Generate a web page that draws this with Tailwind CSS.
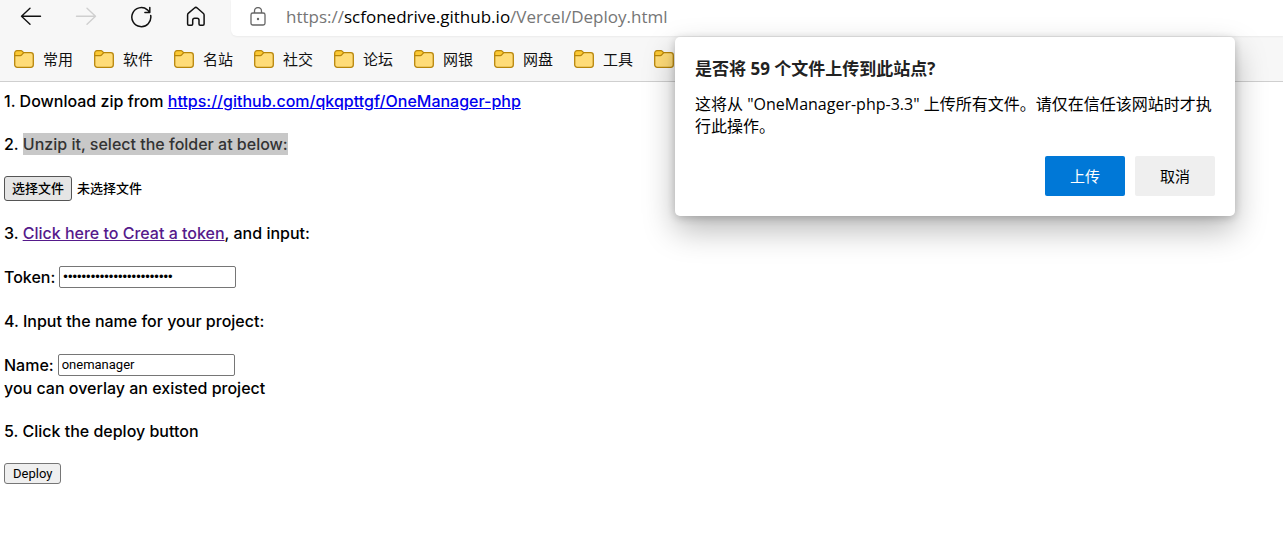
<!DOCTYPE html>
<html lang="zh-CN">
<head>
<meta charset="utf-8">
<title>Deploy</title>
<script src="https://cdn.jsdelivr.net/npm/@tailwindcss/browser@4"></script>
</head>
<body class="relative min-h-screen overflow-x-hidden bg-white text-black">
<svg class="absolute size-0" aria-hidden="true">
  <symbol id="folder" viewBox="0 0 20 18">
    <rect x="0.700" y="2.700" width="18.600" height="14.600" rx="2.500" fill="#ffdc78" stroke="#b8860b" stroke-width="1.300"/>
    <path d="M.7 5.600V3A2.300 2.300 0 0 1 3 .7h4c.6 0 1 .2 1.400.6l1.300 1.400-2 2.200c-.4.500-.8.700-1.400.7z" fill="#fcc934" stroke="#b8860b" stroke-width="1.200" stroke-linejoin="round"/>
  </symbol>
</svg>
<header class="flex flex-col border-b border-[#cfcfcf] bg-[#f7f7f7] font-['Open_Sans','Noto_Sans_CJK_SC',sans-serif]">
  <div class="flex h-9">
    <nav class="flex w-[231px] shrink-0 items-start gap-[31px] pt-1 pl-5">
      <button type="button" aria-label="Back" class="size-6"><svg class="size-6" viewBox="0 0 24 24" fill="none" stroke="#111" stroke-width="1.4" stroke-linecap="round" stroke-linejoin="round"><path d="M20.500 12.300H1.500M10 4.300l-8.500 8 8.500 8"/></svg></button>
      <button type="button" aria-label="Forward" disabled class="size-6"><svg class="size-6" viewBox="0 0 24 24" fill="none" stroke="#cfcfcf" stroke-width="1.400" stroke-linecap="round" stroke-linejoin="round"><path d="M1.500 12.300h19M12 4.300l8.500 8-8.500 8"/></svg></button>
      <button type="button" aria-label="Refresh" class="size-6"><svg class="size-6" viewBox="0 0 24 24" fill="none" stroke="#111" stroke-width="1.500" stroke-linecap="round" stroke-linejoin="round"><path d="M20.700 11.500a9.500 9.500 0 1 1-3.300-5.700l2.300 2.400M19.800 3.600v4.900h-4.900"/></svg></button>
      <button type="button" aria-label="Home" class="size-6"><svg class="size-6" viewBox="0 0 24 24" fill="none" stroke="#111" stroke-width="1.500" stroke-linejoin="round"><path d="M2.600 11c0-.8.300-1.300.9-1.800l6-5.200c.900-.8 1.800-.8 2.700 0l6 5.200c.600.500.9 1 .9 1.800v9c0 .8-.4 1.200-1.200 1.200h-2.700c-.8 0-1.200-.4-1.200-1.200v-3.800c0-1.300-.7-2-2-2h-2.300c-1.300 0-2 .7-2 2V20c0 .8-.4 1.200-1.200 1.200H3.800c-.8 0-1.200-.4-1.200-1.200z"/></svg></button>
    </nav>
    <div class="flex flex-1 items-start gap-5 rounded-bl-md bg-white pt-1 pl-[19px] shadow-[0_1px_2px_rgba(0,0,0,0.05)]">
      <svg class="mt-[3px] h-[19px] w-4 shrink-0" viewBox="0 0 16 19" fill="none" stroke="#666" stroke-width="1.300"><rect x="1" y="6" width="14" height="12" rx="1.800"/><path d="M4.500 6V4a3.500 3.500 0 0 1 7 0v2"/><circle cx="8" cy="12" r="1.200" fill="#666" stroke="none"/></svg>
      <p class="text-[17px] leading-[26px] text-[#767676]">https://<span class="text-black">scfonedrive.github.io</span>/Vercel/Deploy.html</p>
    </div>
  </div>
  <nav class="flex h-[45px] items-center overflow-hidden pl-[14px] text-[15px] leading-5 text-[#111]">
    <a href="#" class="flex w-20 shrink-0 items-center gap-[9px]"><svg class="h-[18px] w-5"><use href="#folder"/></svg>常用</a>
    <a href="#" class="flex w-20 shrink-0 items-center gap-[9px]"><svg class="h-[18px] w-5"><use href="#folder"/></svg>软件</a>
    <a href="#" class="flex w-20 shrink-0 items-center gap-[9px]"><svg class="h-[18px] w-5"><use href="#folder"/></svg>名站</a>
    <a href="#" class="flex w-20 shrink-0 items-center gap-[9px]"><svg class="h-[18px] w-5"><use href="#folder"/></svg>社交</a>
    <a href="#" class="flex w-20 shrink-0 items-center gap-[9px]"><svg class="h-[18px] w-5"><use href="#folder"/></svg>论坛</a>
    <a href="#" class="flex w-20 shrink-0 items-center gap-[9px]"><svg class="h-[18px] w-5"><use href="#folder"/></svg>网银</a>
    <a href="#" class="flex w-20 shrink-0 items-center gap-[9px]"><svg class="h-[18px] w-5"><use href="#folder"/></svg>网盘</a>
    <a href="#" class="flex w-20 shrink-0 items-center gap-[9px]"><svg class="h-[18px] w-5"><use href="#folder"/></svg>工具</a>
    <a href="#" aria-label="Folder" class="flex w-20 shrink-0 items-center"><svg class="h-[18px] w-5"><use href="#folder"/></svg></a>
  </nav>
</header>

<main class="flex flex-col items-start gap-[21px] px-1 pt-2 pb-8 font-['Inter','Noto_Sans_CJK_SC',sans-serif] text-base leading-[22px] font-medium">
  <p>1. Download zip from <a href="#" class="text-[#0000ee] underline">https://github.com/qkqpttgf/OneManager-php</a></p>
  <p>2. <span class="bg-[#c8c8c8] py-px text-[#333]">Unzip it, select the folder at below:</span></p>
  <div class="flex items-center gap-[5px] text-[13px] leading-[19px]">
    <input id="folder-input" type="file" class="sr-only">
    <label for="folder-input" class="rounded-[3px] border border-[#555] bg-[#e5e5e5] px-[7px] py-0.5">选择文件</label>
    <span>未选择文件</span>
  </div>
  <p>3. <a href="#" class="text-[#551a8b] underline">Click here to Creat a token</a>, and input:</p>
  <div class="flex h-6 items-center gap-1">
    <label for="token">Token:</label>
    <input id="token" type="password" value="abcdefghijklmnopqrstuvwx" class="h-[22px] w-[177px] rounded-[2px] border border-[#767676] bg-white px-[3px] font-['Liberation_Sans',sans-serif] text-[13px] font-normal">
  </div>
  <p>4. Input the name for your project:</p>
  <div>
    <div class="flex h-6 items-center gap-1">
      <label for="name">Name:</label>
      <input id="name" type="text" value="onemanager" class="h-[22px] w-[177px] rounded-[2px] border border-[#767676] bg-white px-[3px] font-['Roboto',sans-serif] text-[13px] font-normal">
    </div>
    <p>you can overlay an existed project</p>
  </div>
  <p>5. Click the deploy button</p>
  <button type="button" class="h-[21px] rounded-[3px] border border-[#767676] bg-[#efefef] px-2 font-['Roboto',sans-serif] text-[13px] leading-[19px] font-normal">Deploy</button>
</main>

<section role="dialog" aria-labelledby="dialog-title" class="absolute top-[37px] right-12 w-[560px] rounded-[5px] bg-white p-5 font-['Open_Sans','Noto_Sans_CJK_SC',sans-serif] shadow-[0_14px_32px_rgba(0,0,0,0.28),0_2px_8px_rgba(0,0,0,0.2)]">
  <h1 id="dialog-title" class="text-[17px] leading-6 font-bold text-[#222]">是否将 59 个文件上传到此站点?</h1>
  <p class="mt-3 text-base leading-[22px] text-black">这将从 "OneManager-php-3.3" 上传所有文件。请仅在信任该网站时才执行此操作。</p>
  <div class="mt-[19px] flex justify-end gap-2.5 text-[15px]">
    <button type="button" class="h-10 w-20 rounded-[2px] bg-[#0078d7] text-white">上传</button>
    <button type="button" class="h-10 w-20 rounded-[2px] bg-[#efefef] text-black">取消</button>
  </div>
</section>
</body>
</html>
